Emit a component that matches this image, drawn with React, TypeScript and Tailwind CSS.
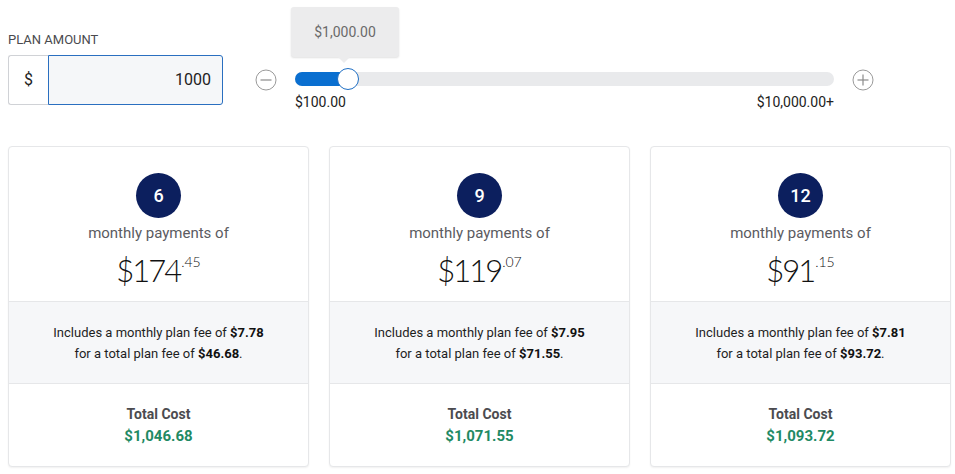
import React from "react";

type Plan = {
  n: number;
  dollars: string;
  cents: string;
  monthlyFee: string;
  totalFee: string;
  total: string;
};

const plans: Plan[] = [
  { n: 6, dollars: "$174", cents: ".45", monthlyFee: "$7.78", totalFee: "$46.68", total: "$1,046.68" },
  { n: 9, dollars: "$119", cents: ".07", monthlyFee: "$7.95", totalFee: "$71.55", total: "$1,071.55" },
  { n: 12, dollars: "$91", cents: ".15", monthlyFee: "$7.81", totalFee: "$93.72", total: "$1,093.72" },
];

function CircleIcon({ plus }: { plus?: boolean }) {
  return (
    <svg width="22" height="22" viewBox="0 0 22 22" className="block">
      <circle cx="11" cy="11" r="10" fill="white" stroke="#9a9a9a" strokeWidth="1" />
      <line x1="5.5" y1="11" x2="16.5" y2="11" stroke="#8a8a8a" strokeWidth="1.2" />
      {plus && <line x1="11" y1="5.5" x2="11" y2="16.5" stroke="#8a8a8a" strokeWidth="1.2" />}
    </svg>
  );
}

function Card({ p }: { p: Plan }) {
  return (
    <div className="w-[301px] shrink-0 h-[321px] rounded-[4px] border border-[#e6e7e9] bg-white shadow-[0_1px_2px_rgba(0,0,0,0.06)] flex flex-col overflow-hidden">
      <div className="h-[155px] shrink-0 flex flex-col items-center pt-[26px] border-b border-[#e6e7e9]">
        <div className="w-[45px] h-[45px] rounded-full bg-[#0c1f5e] flex items-center justify-center text-white text-[18px] font-medium leading-none">
          {p.n}
        </div>
        <div className="mt-[5px] text-[15px] leading-[20px] text-[#5b5b5f]">monthly payments of</div>
        <div className="mt-[10px] flex items-start text-[#111] [font-family:Lato,sans-serif] font-light">
          <span className="text-[31px] leading-[34px] tracking-[-2px]">{p.dollars}</span>
          <span className="text-[14px] leading-[14px] mt-[2px] ml-[1px]">{p.cents}</span>
        </div>
      </div>
      <div className="h-[82px] shrink-0 bg-[#f6f7f9] border-b border-[#e6e7e9] flex flex-col items-center justify-center text-[13px] leading-[21px] text-[#1e1e1e]">
        <div>
          Includes a monthly plan fee of <span className="font-bold text-[#111]">{p.monthlyFee}</span>
        </div>
        <div>
          for a total plan fee of <span className="font-bold text-[#111]">{p.totalFee}</span>.
        </div>
      </div>
      <div className="flex-1 flex flex-col items-center pt-[20px]">
        <div className="text-[14px] leading-[20px] font-bold text-[#4b4b4f]">Total Cost</div>
        <div className="mt-[2px] text-[15px] leading-[20px] font-bold text-[#1f8a64]">{p.total}</div>
      </div>
    </div>
  );
}

export default function App() {
  return (
    <div className="w-[955px] h-[474px] bg-white [font-family:Roboto,'Liberation_Sans',sans-serif] overflow-hidden">
      <div className="flex items-start px-2 pt-[33px]">
        <div className="flex flex-col w-[215px]">
          <div className="text-[13px] leading-[14px] text-[#4a4a4e] uppercase">Plan Amount</div>
          <div className="mt-[8px] flex h-[50px]">
            <div className="w-[40px] border border-[#d0d2d6] border-r-0 rounded-l-[3px] bg-white flex items-center justify-center text-[16px] text-[#222]">
              $
            </div>
            <div className="flex-1 border border-[#2a6fc0] rounded-r-[3px] bg-[#f5f7f9] flex items-center justify-end pr-[11px] text-[16px] text-[#222]">
              1000
            </div>
          </div>
        </div>
        <div className="ml-[32px] mt-[36px] flex items-start">
          <CircleIcon />
          <div className="ml-[18px] w-[539px] flex flex-col">
            <div className="relative mt-[3px] h-[14px] rounded-full bg-[#e9eaec]">
              <div className="absolute left-0 top-0 h-[14px] w-[54px] rounded-full bg-[#0a6fd0]" />
              <div className="absolute left-[42px] top-[-4px] w-[22px] h-[22px] rounded-full bg-white border-[1.5px] border-[#1f6fc4]" />
              <div className="absolute left-[-4px] top-[-65px] w-[108px] h-[50px] rounded-[3px] bg-[#ececed] shadow-[0_1px_2px_rgba(0,0,0,0.12)] flex items-center justify-center text-[14px] text-[#6a6a6a]">
                $1,000.00
                <div className="absolute left-[46px] bottom-[-6px] w-0 h-0 border-l-[7px] border-r-[7px] border-t-[7px] border-l-transparent border-r-transparent border-t-[#ececed]" />
              </div>
            </div>
            <div className="mt-[8px] flex justify-between text-[14px] leading-[16px] text-[#222]">
              <span>$100.00</span>
              <span>$10,000.00+</span>
            </div>
          </div>
          <div className="ml-[18px]">
            <CircleIcon plus />
          </div>
        </div>
      </div>
      <div className="flex gap-[20px] pl-2 mt-[36px]">
        {plans.map((p) => (
          <Card key={p.n} p={p} />
        ))}
      </div>
    </div>
  );
}
